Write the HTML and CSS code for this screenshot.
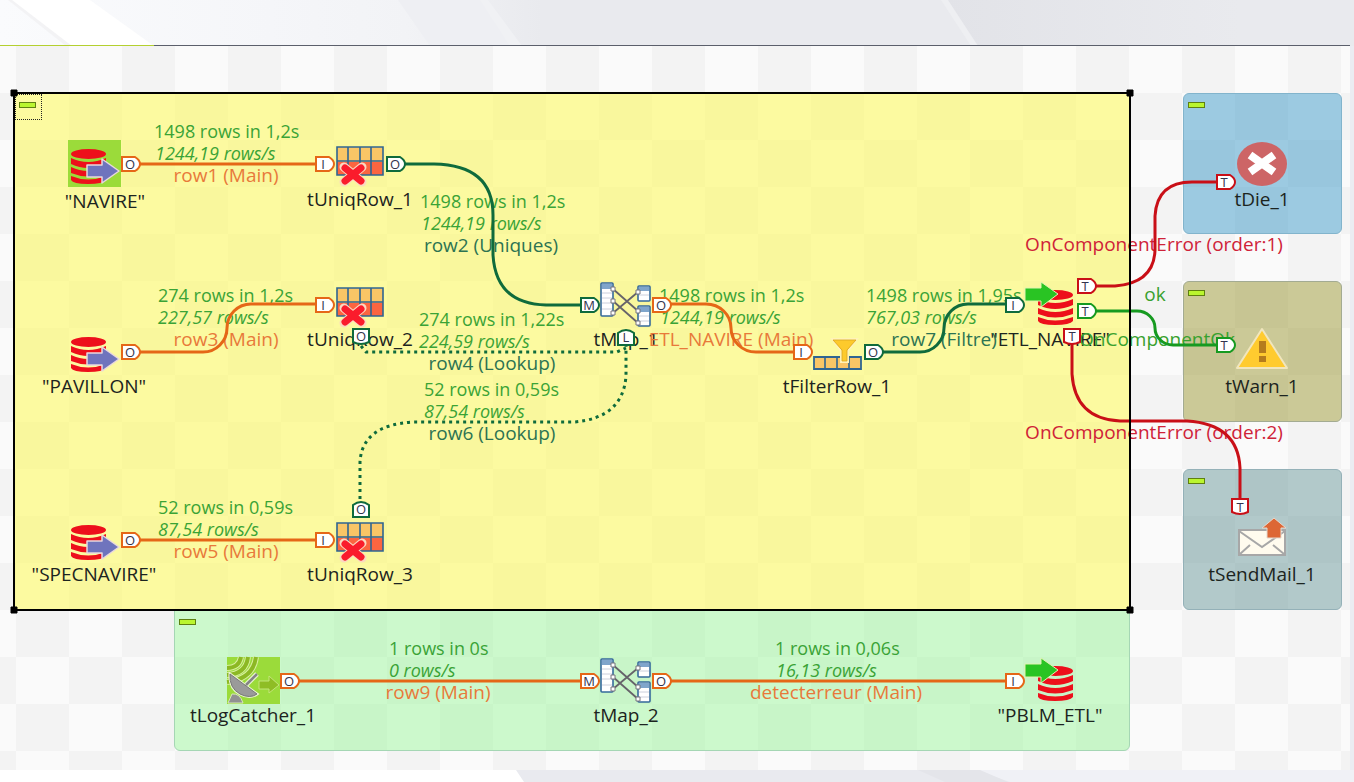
FILE: index.html
```
<!DOCTYPE html>
<html lang="en">
<head>
<meta charset="utf-8">
<title>ETL_NAVIRE job</title>
<link rel="stylesheet" href="styles.css">
</head>
<body>
<header class="banner">
  <svg class="banner-art" viewBox="0 0 1354 45" preserveAspectRatio="none" aria-hidden="true">
    <defs>
      <linearGradient id="sky" x1="0" x2="1" y1="0" y2="0">
        <stop offset="0" stop-color="#fafbfd"/>
        <stop offset=".2" stop-color="#f5f6f9"/>
        <stop offset=".3" stop-color="#f2f3f6"/>
        <stop offset=".4" stop-color="#e9eaee"/>
        <stop offset="1" stop-color="#e9eaee"/>
      </linearGradient>
      <linearGradient id="fold" x1="0" x2="1" y1="0" y2="0">
        <stop offset="0" stop-color="#e2e3e8"/>
        <stop offset="1" stop-color="#e9eaee"/>
      </linearGradient>
    </defs>
    <rect width="1354" height="45" fill="url(#sky)"/>
    <path d="M8 0H90L154 45H68Z" fill="#fff"/>
    <path d="M8 0H12L72 45H66Z" fill="#f3f3f5"/>
    <path d="M398 0H484L520 45H430Z" fill="#eeeff3"/>
    <path d="M480 0H488L522 45H510Z" fill="#f0f1f4"/>
    <path d="M945 0H1240V45H975Z" fill="url(#fold)"/>
    <path d="M941 0H948L978 45H971Z" fill="#eeeff2"/>
  </svg>
</header>
<main class="canvas">
  <section class="subjob subjob-main" aria-label="Main subjob"><button class="collapse" aria-label="Collapse main subjob"></button></section>
  <section class="subjob subjob-log" aria-label="Log subjob"><button class="collapse" aria-label="Collapse log subjob"></button></section>
  <section class="subjob side subjob-die" aria-label="tDie subjob"><button class="collapse" aria-label="Collapse tDie subjob"></button></section>
  <section class="subjob side subjob-warn" aria-label="tWarn subjob"><button class="collapse" aria-label="Collapse tWarn subjob"></button></section>
  <section class="subjob side subjob-mail" aria-label="tSendMail subjob"><button class="collapse" aria-label="Collapse tSendMail subjob"></button></section>

  <svg class="diagram" width="1354" height="724" viewBox="0 46 1354 724">
    <defs>
      <g id="cylinder" fill="#ed0f1b">
        <path d="M0 9Q17 17 35 9V15Q17 23 0 15Z"/>
        <path d="M0 18Q17 26 35 18V24Q17 31 0 24Z"/>
        <path d="M0 27Q17 34 35 27V31Q32 35 17 35T0 31Z"/>
        <ellipse cx="17.500" cy="5" rx="17.500" ry="5"/>
      </g>
      <g id="db-input">
        <use href="#cylinder" x="3" y="9"/>
        <path d="M19 25H34V19L51 31 34 43V37H19Z" fill="#6f74bd" stroke="#e9d8dd" stroke-width="1.500" stroke-linejoin="round"/>
      </g>
      <g id="db-output">
        <use href="#cylinder" x="13" y="9"/>
        <path d="M0 7H16V1L33 13 16 26V20H0Z" fill="#29c423" stroke="#e2f3b0" stroke-width="1" stroke-linejoin="round"/>
      </g>
      <g id="uniq">
        <path d="M1 1H47V16H1Z" fill="#f9c566"/>
        <path d="M1 16H47V29H1Z" fill="#fb6540"/>
        <path d="M1 1H47V29H1ZM1 15H47M12 1V29M24 1V29M35 1V29" fill="none" stroke="#2f6592" stroke-width="1.600"/>
        <path d="M8 21 26 36M26 21 8 36" stroke="#fbd9c0" stroke-width="9" stroke-linecap="round"/>
        <path d="M9 22 25 35M25 22 9 35" stroke="#fa1c2c" stroke-width="7" stroke-linecap="round"/>
      </g>
      <g id="map">
        <g fill="#fff" stroke="#356a9b" stroke-width="1.600">
          <rect x="1" y="1" width="12" height="33" rx="1"/>
          <rect x="38" y="4" width="12" height="15" rx="1"/>
          <rect x="38" y="24" width="12" height="20" rx="1"/>
        </g>
        <path d="M2 2H12V7H2ZM39 5H49V9H39ZM39 25H49V30H39Z" fill="#7fa5cb"/>
        <path d="M2 11H12M2 16H12M2 21H12M2 27H12M39 13H49M39 34H49M39 39H49" stroke="#ccd0dc"/>
        <path d="M13 7 38 29M13 19 38 41M13 31 38 10" stroke="#66636a" stroke-width="1.800"/>
        <path d="M11 5H15V9H11ZM11 17H15V21H11ZM11 29H15V33H11ZM36 8H40V12H36ZM36 27H40V31H36ZM36 39H40V43H36Z" fill="#fff" stroke="#77757c"/>
      </g>
      <g id="filter">
        <path d="M1 19H48V31H1Z" fill="#f9c566" stroke="#2f6592" stroke-width="1.800"/>
        <path d="M12 19V31M24 19V31M36 19V31" stroke="#2f6592" stroke-width="1.600"/>
        <path d="M19 1H44L35 13V24H28V13Z" fill="#fdca2c" stroke="#fff3b8" stroke-width="2"/>
        <path d="M20 2H43L34 12V23H29V12Z" fill="#fdca2c" stroke="#d9a422" stroke-width=".8"/>
      </g>
      <g id="port-right"><path d="M1 1H14Q19 4 19 8T14 15H1Z"/></g>
      <g id="port-up"><path d="M1 16V4Q9-2 17 4V16Z"/></g>
      <g id="port-down"><path d="M1 1V14Q9 18 17 14V1Z"/></g>
    </defs>

    <rect x="68" y="140" width="53" height="47" fill="#9bdb3a"/>
    <rect x="227" y="657" width="53" height="47" fill="#9bdb3a"/>

    <g class="name">
      <text x="105" y="208">"NAVIRE"</text>
      <text x="94" y="393">"PAVILLON"</text>
      <text x="94" y="581">"SPECNAVIRE"</text>
      <text x="360" y="206">tUniqRow_1</text>
      <text x="360" y="346">tUniqRow_2</text>
      <text x="360" y="581">tUniqRow_3</text>
      <text x="626" y="346">tMap_1</text>
      <text x="837" y="393">tFilterRow_1</text>
      <text x="1050" y="346">"ETL_NAVIRE"</text>
      <text x="1262" y="206">tDie_1</text>
      <text x="1262" y="393">tWarn_1</text>
      <text x="1262" y="581">tSendMail_1</text>
      <text x="253" y="722">tLogCatcher_1</text>
      <text x="626" y="722">tMap_2</text>
      <text x="1050" y="722">"PBLM_ETL"</text>
    </g>

    <g class="stats">
      <text x="154" y="138">1498 rows in 1,2s</text><text class="rate" x="155" y="160">1244,19 rows/s</text>
      <text x="420" y="208">1498 rows in 1,2s</text><text class="rate" x="421" y="230">1244,19 rows/s</text>
      <text x="158" y="302">274 rows in 1,2s</text><text class="rate" x="158" y="324">227,57 rows/s</text>
      <text x="419" y="326">274 rows in 1,22s</text><text class="rate" x="419" y="348">224,59 rows/s</text>
      <text x="424" y="396">52 rows in 0,59s</text><text class="rate" x="424" y="418">87,54 rows/s</text>
      <text x="158" y="514">52 rows in 0,59s</text><text class="rate" x="158" y="536">87,54 rows/s</text>
      <text x="659" y="302">1498 rows in 1,2s</text><text class="rate" x="660" y="324">1244,19 rows/s</text>
      <text x="866" y="302">1498 rows in 1,95s</text><text class="rate" x="866" y="324">767,03 rows/s</text>
      <text x="389" y="655">1 rows in 0s</text><text class="rate" x="389" y="677">0 rows/s</text>
      <text x="775" y="655">1 rows in 0,06s</text><text class="rate" x="776" y="677">16,13 rows/s</text>
    </g>

    <g class="link-name flow">
      <text x="226" y="182">row1 (Main)</text>
      <text x="226" y="346">row3 (Main)</text>
      <text x="226" y="558">row5 (Main)</text>
      <text x="731" y="346">ETL_NAVIRE (Main)</text>
      <text x="438" y="699">row9 (Main)</text>
      <text x="836" y="699">detecterreur (Main)</text>
    </g>
    <g class="link-name branch">
      <text x="491" y="252">row2 (Uniques)</text>
      <text x="492" y="370">row4 (Lookup)</text>
      <text x="492" y="440">row6 (Lookup)</text>
      <text x="944" y="346">row7 (Filtre)</text>
    </g>
    <g class="link-name error">
      <text x="1154" y="251">OnComponentError (order:1)</text>
      <text x="1154" y="439">OnComponentError (order:2)</text>
    </g>
    <g class="link-name ok">
      <text x="1155" y="301">ok</text>
      <text x="1157" y="346">OnComponentOk</text>
    </g>

    <use href="#db-input" x="68" y="140"/>
    <use href="#db-input" x="68" y="328"/>
    <use href="#db-input" x="68" y="516"/>
    <use href="#uniq" x="336" y="146"/>
    <use href="#uniq" x="336" y="287"/>
    <use href="#uniq" x="336" y="522"/>
    <use href="#map" x="600" y="282"/>
    <use href="#map" x="600" y="658"/>
    <use href="#filter" x="813" y="338"/>
    <use href="#db-output" x="1025" y="281"/>
    <use href="#db-output" x="1025" y="657"/>

    <g>
      <ellipse cx="1262" cy="164" rx="25" ry="22" fill="#cd6566"/>
      <path d="M1250 155 1274 172M1274 155 1250 172" stroke="#fff" stroke-width="8"/>
    </g>
    <g>
      <path d="M1262 329 1287 368H1237Z" fill="#ffcb2f" stroke="#f1e6bd" stroke-width="2" stroke-linejoin="round"/>
      <path d="M1259 341H1266V353H1259ZM1259 356H1266V362H1259Z" fill="#b57c1d"/>
    </g>
    <g>
      <path d="M1239 530H1285V555H1239Z" fill="#fffbee" stroke="#a7a7a7" stroke-width="2"/>
      <path d="M1239 531 1262 547 1285 531M1240 554 1250 545M1284 554 1273 545" fill="none" stroke="#a7a7a7" stroke-width="2"/>
      <path d="M1274 518 1286 528H1281V538H1267V528H1262Z" fill="#dd6735" stroke="#e4d9cf" stroke-width="1"/>
    </g>
    <g>
      <path d="M227 668Q239 668 241 657M227 675Q246 674 248 657M227 682Q253 679 256 657" fill="none" stroke="#d8ef9f" stroke-width="6"/>
      <path d="M227 668Q239 668 241 657M227 675Q246 674 248 657M227 682Q253 679 256 657" fill="none" stroke="#8cb824" stroke-width="4"/>
      <path d="M246 685 257 674" stroke="#e8f3cf" stroke-width="5"/>
      <path d="M230 674Q229 688 240 694 250 699 257 694Z" fill="#9a9a9a" stroke="#e8f3cf" stroke-width="3"/>
      <path d="M230 674Q229 688 240 694 250 699 257 694Z" fill="#9a9a9a" stroke="#777" stroke-width="1"/>
      <path d="M246 685 257 674" stroke="#848484" stroke-width="2.500"/>
      <path d="M228 703 232 694Q240 693 243 703Z" fill="#919191" stroke="#d8e9b9"/>
      <path d="M259 681H269V676L279 685 269 693V689H259Z" fill="#8fbd25" stroke="#c3e57a"/>
    </g>

    <g class="wire flow">
      <path d="M139 164H315"/>
      <path d="M139 352H203A24 24 0 0 0 227 328 24 24 0 0 1 251 304H315"/>
      <path d="M139 540H315"/>
      <path d="M670 304H706A25 24 0 0 1 731 328 25 24 0 0 0 756 352H793"/>
      <path d="M299 681H581M670 681H1006"/>
    </g>
    <g class="wire branch">
      <path d="M405 164H434Q493 165 493 215V255Q496 304 546 305H581"/>
      <path d="M883 352H920A24 24 0 0 0 944 328 24 24 0 0 1 968 304H1006"/>
      <path class="lookup" d="M361 346 366 352H617L626 348"/>
      <path class="lookup" d="M360 499V462Q362 425 413 422H574Q623 418 626 376V346"/>
    </g>
    <g class="wire error">
      <path d="M1096 286H1115Q1154 283 1155 250V216Q1157 182 1192 182H1216"/>
      <path d="M1072 344V374Q1075 419 1120 421H1187Q1238 424 1240 468V499"/>
    </g>
    <g class="wire ok"><path d="M1096 311H1137A18 17 0 0 1 1155 328 18 17 0 0 0 1173 345H1216"/></g>

    <g class="port flow">
      <use href="#port-right" x="121" y="156"/><text x="130" y="169">O</text>
      <use href="#port-right" x="315" y="156"/><text x="323" y="169">I</text>
      <use href="#port-right" x="121" y="344"/><text x="130" y="357">O</text>
      <use href="#port-right" x="315" y="297"/><text x="323" y="310">I</text>
      <use href="#port-right" x="121" y="532"/><text x="130" y="545">O</text>
      <use href="#port-right" x="315" y="532"/><text x="323" y="545">I</text>
      <use href="#port-right" x="652" y="297"/><text x="661" y="310">O</text>
      <use href="#port-right" x="793" y="344"/><text x="801" y="357">I</text>
      <use href="#port-right" x="280" y="673"/><text x="289" y="686">O</text>
      <use href="#port-right" x="580" y="673"/><text x="589" y="686">M</text>
      <use href="#port-right" x="652" y="673"/><text x="661" y="686">O</text>
      <use href="#port-right" x="1005" y="673"/><text x="1013" y="686">I</text>
    </g>
    <g class="port branch">
      <use href="#port-right" x="386" y="156"/><text x="395" y="169">O</text>
      <use href="#port-right" x="580" y="297"/><text x="589" y="310">M</text>
      <use href="#port-right" x="864" y="344"/><text x="873" y="357">O</text>
      <use href="#port-right" x="1005" y="297"/><text x="1013" y="310">I</text>
      <use href="#port-down" x="352" y="328"/><text x="361" y="341">O</text>
      <use href="#port-up" x="352" y="501"/><text x="361" y="514">O</text>
      <use href="#port-up" x="617" y="329"/><text x="626" y="342">L</text>
    </g>
    <g class="port error">
      <use href="#port-right" x="1077" y="278"/><text x="1085" y="291">T</text>
      <use href="#port-right" x="1216" y="174"/><text x="1224" y="187">T</text>
      <use href="#port-down" x="1063" y="328"/><text x="1072" y="341">T</text>
      <use href="#port-down" x="1231" y="498"/><text x="1240" y="512">T</text>
    </g>
    <g class="port ok">
      <use href="#port-right" x="1077" y="303"/><text x="1085" y="316">T</text>
      <use href="#port-right" x="1216" y="337"/><text x="1224" y="350">T</text>
    </g>

    <g class="selection">
      <path d="M14 93H1130V610H14Z"/>
      <path class="handles" d="M11 90H17V96H11ZM1127 90H1133V96H1127ZM11 607H17V613H11ZM1127 607H1133V613H1127Z"/>
    </g>
  </svg>
</main>
<footer class="base">
  <svg class="banner-art" viewBox="0 0 1354 12" preserveAspectRatio="none" aria-hidden="true">
    <path d="M516 0H1354V12H524Z" fill="#e9eaef"/>
    <path d="M975 0H1354V12H1010Z" fill="#f0f1f6"/>
    <path d="M918 0H980L1008 12H945Z" fill="#e4e5ea"/>
  </svg>
</footer>
</body>
</html>
```
FILE: styles.css
```
* { box-sizing: border-box; }

body {
  margin: 0;
  min-height: 100vh;
  display: flex;
  flex-direction: column;
  background: #fff;
  font-family: "Open Sans", "Noto Sans", sans-serif;
  font-size: 18px;
}

.banner { height: 46px; position: relative; }
.banner::after {
  content: "";
  position: absolute;
  inset: auto 4px 0 0;
  height: 1px;
  background: linear-gradient(90deg, #b4d030 154px, #5b5f6b 154px);
}
.banner-art { display: block; width: 100%; height: 100%; }
.base { height: 12px; }

.canvas {
  flex: 1;
  position: relative;
  overflow: hidden;
  border-right: 4px solid #ebecf2;
  background: repeating-conic-gradient(#f3f3f3 0 25%, #fafafa 0 50%) 16px 47px / 106px 94px;
}
.diagram { display: block; position: relative; pointer-events: none; }

.subjob { position: absolute; border: 1px solid; border-radius: 6px; }
.subjob-main {
  left: 14px; top: 47px; width: 1116px; height: 517px;
  border-radius: 0;
  border-color: transparent;
  background: rgba(254, 250, 86, .55);
}
.subjob-log {
  left: 174px; top: 564px; width: 956px; height: 141px;
  border-radius: 0 0 6px 6px;
  border-color: #a5d6b4;
  background: rgba(135, 247, 135, .4);
}
.side { left: 1183px; width: 159px; height: 141px; }
.subjob-die { top: 47px; border-color: #82b4cc; background: rgba(62, 154, 200, .5); }
.subjob-warn { top: 235px; border-color: #a3ab92; background: rgba(156, 152, 52, .5); }
.subjob-mail { top: 423px; border-color: #94b1b8; background: rgba(106, 152, 154, .5); }

.collapse {
  position: absolute;
  left: 4px;
  top: 8px;
  width: 17px;
  height: 6px;
  padding: 0;
  border: 1px solid #5f8010;
  background: #baf52f;
}
.subjob-main .collapse::after {
  content: "";
  position: absolute;
  inset: -9px -7px -13px -5px;
  border: 1px dotted #222;
}

.flow { --line: #e56717; --ink: #e8793a; }
.branch { --line: #0f6b3c; --ink: #2c7352; }
.error { --line: #c90f17; --ink: #cf2238; }
.ok { --line: #169a20; --ink: #38a12e; }

.name { fill: #1c2420; font-size: 19px; text-anchor: middle; }
.stats { fill: #3aa336; }
.rate { font-style: italic; }
.link-name { fill: var(--ink); font-size: 19px; text-anchor: middle; }

.wire { fill: none; stroke: var(--line); stroke-width: 3px; }
.lookup { stroke-dasharray: 3 4; }

.port { fill: #fff; stroke: var(--line); stroke-width: 2px; }
.port text {
  fill: #33334d;
  stroke: none;
  font-size: 13px;
  text-anchor: middle;
}

.selection { fill: none; stroke: #000; stroke-width: 2px; }
.handles { fill: #000; stroke: #000; stroke-width: 1px; }
```
